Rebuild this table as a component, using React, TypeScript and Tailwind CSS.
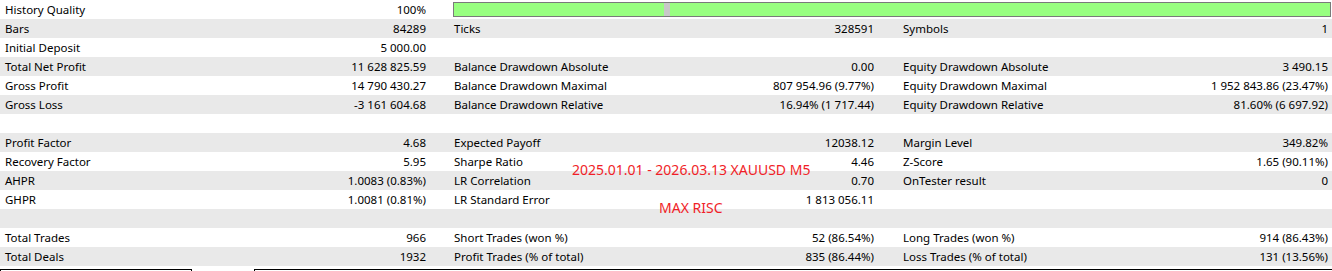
import React from 'react';

type Cell = [string, string] | null;

const rows: Cell[][] = [
  [['History Quality', '100%'], null, null],
  [['Bars', '84289'], ['Ticks', '328591'], ['Symbols', '1']],
  [['Initial Deposit', '5 000.00'], null, null],
  [
    ['Total Net Profit', '11 628 825.59'],
    ['Balance Drawdown Absolute', '0.00'],
    ['Equity Drawdown Absolute', '3 490.15'],
  ],
  [
    ['Gross Profit', '14 790 430.27'],
    ['Balance Drawdown Maximal', '807 954.96 (9.77%)'],
    ['Equity Drawdown Maximal', '1 952 843.86 (23.47%)'],
  ],
  [
    ['Gross Loss', '-3 161 604.68'],
    ['Balance Drawdown Relative', '16.94% (1 717.44)'],
    ['Equity Drawdown Relative', '81.60% (6 697.92)'],
  ],
  [null, null, null],
  [['Profit Factor', '4.68'], ['Expected Payoff', '12038.12'], ['Margin Level', '349.82%']],
  [['Recovery Factor', '5.95'], ['Sharpe Ratio', '4.46'], ['Z-Score', '1.65 (90.11%)']],
  [['AHPR', '1.0083 (0.83%)'], ['LR Correlation', '0.70'], ['OnTester result', '0']],
  [['GHPR', '1.0081 (0.81%)'], ['LR Standard Error', '1 813 056.11'], null],
  [null, null, null],
  [['Total Trades', '966'], ['Short Trades (won %)', '52 (86.54%)'], ['Long Trades (won %)', '914 (86.43%)']],
  [
    ['Total Deals', '1932'],
    ['Profit Trades (% of total)', '835 (86.44%)'],
    ['Loss Trades (% of total)', '131 (13.56%)'],
  ],
];

function StatCell({ cell, className }: { cell: Cell; className: string }) {
  return (
    <div className={`flex items-center justify-between whitespace-nowrap ${className}`}>
      <span>{cell?.[0] ?? ''}</span>
      <span>{cell?.[1] ?? ''}</span>
    </div>
  );
}

function QualityBar() {
  return (
    <div className="col-span-2 flex h-[19px] items-start pl-[3px] pr-[1px] pt-[2px]">
      <div className="flex h-[15px] w-full border border-[#7a7a7a]">
        <div className="w-[210px] bg-[#98ff80]" />
        <div className="w-[6px] bg-[#c8c8c8]" />
        <div className="flex-1 bg-[#98ff80]" />
      </div>
    </div>
  );
}

export default function App() {
  return (
    <div
      className="relative h-[271px] w-[1332px] overflow-hidden bg-white text-[11.5px] text-black"
      style={{ fontFamily: '"Noto Sans", "Open Sans", sans-serif' }}
    >
      {rows.map((r, i) => (
        <div
          key={i}
          className={`grid h-[19px] grid-cols-[450px_449px_1fr] leading-[19px] ${i % 2 === 1 ? 'bg-[#e9e9e9]' : 'bg-white'}`}
        >
          <StatCell cell={r[0]} className="pl-[5px] pr-[24px]" />
          {i === 0 ? (
            <QualityBar />
          ) : (
            <>
              <StatCell cell={r[1]} className="pl-[4px] pr-[25px]" />
              <StatCell cell={r[2]} className="pl-[4px] pr-[4px]" />
            </>
          )}
        </div>
      ))}

      {/* tab strip below the table */}
      <div className="mt-[3px] flex h-[2px]">
        <div className="w-[192px] border-l border-r border-t border-black" />
        <div className="w-[62px]" />
        <div className="flex-1 border-l border-t border-black" />
      </div>

      {/* red annotations */}
      <div className="absolute left-[572px] top-[160px] text-[14px] leading-[20px] text-[#f01e28]">
        2025.01.01 - 2026.03.13 XAUUSD M5
      </div>
      <div className="absolute left-[659px] top-[198px] text-[14px] leading-[20px] text-[#f01e28]">MAX RISC</div>
    </div>
  );
}
